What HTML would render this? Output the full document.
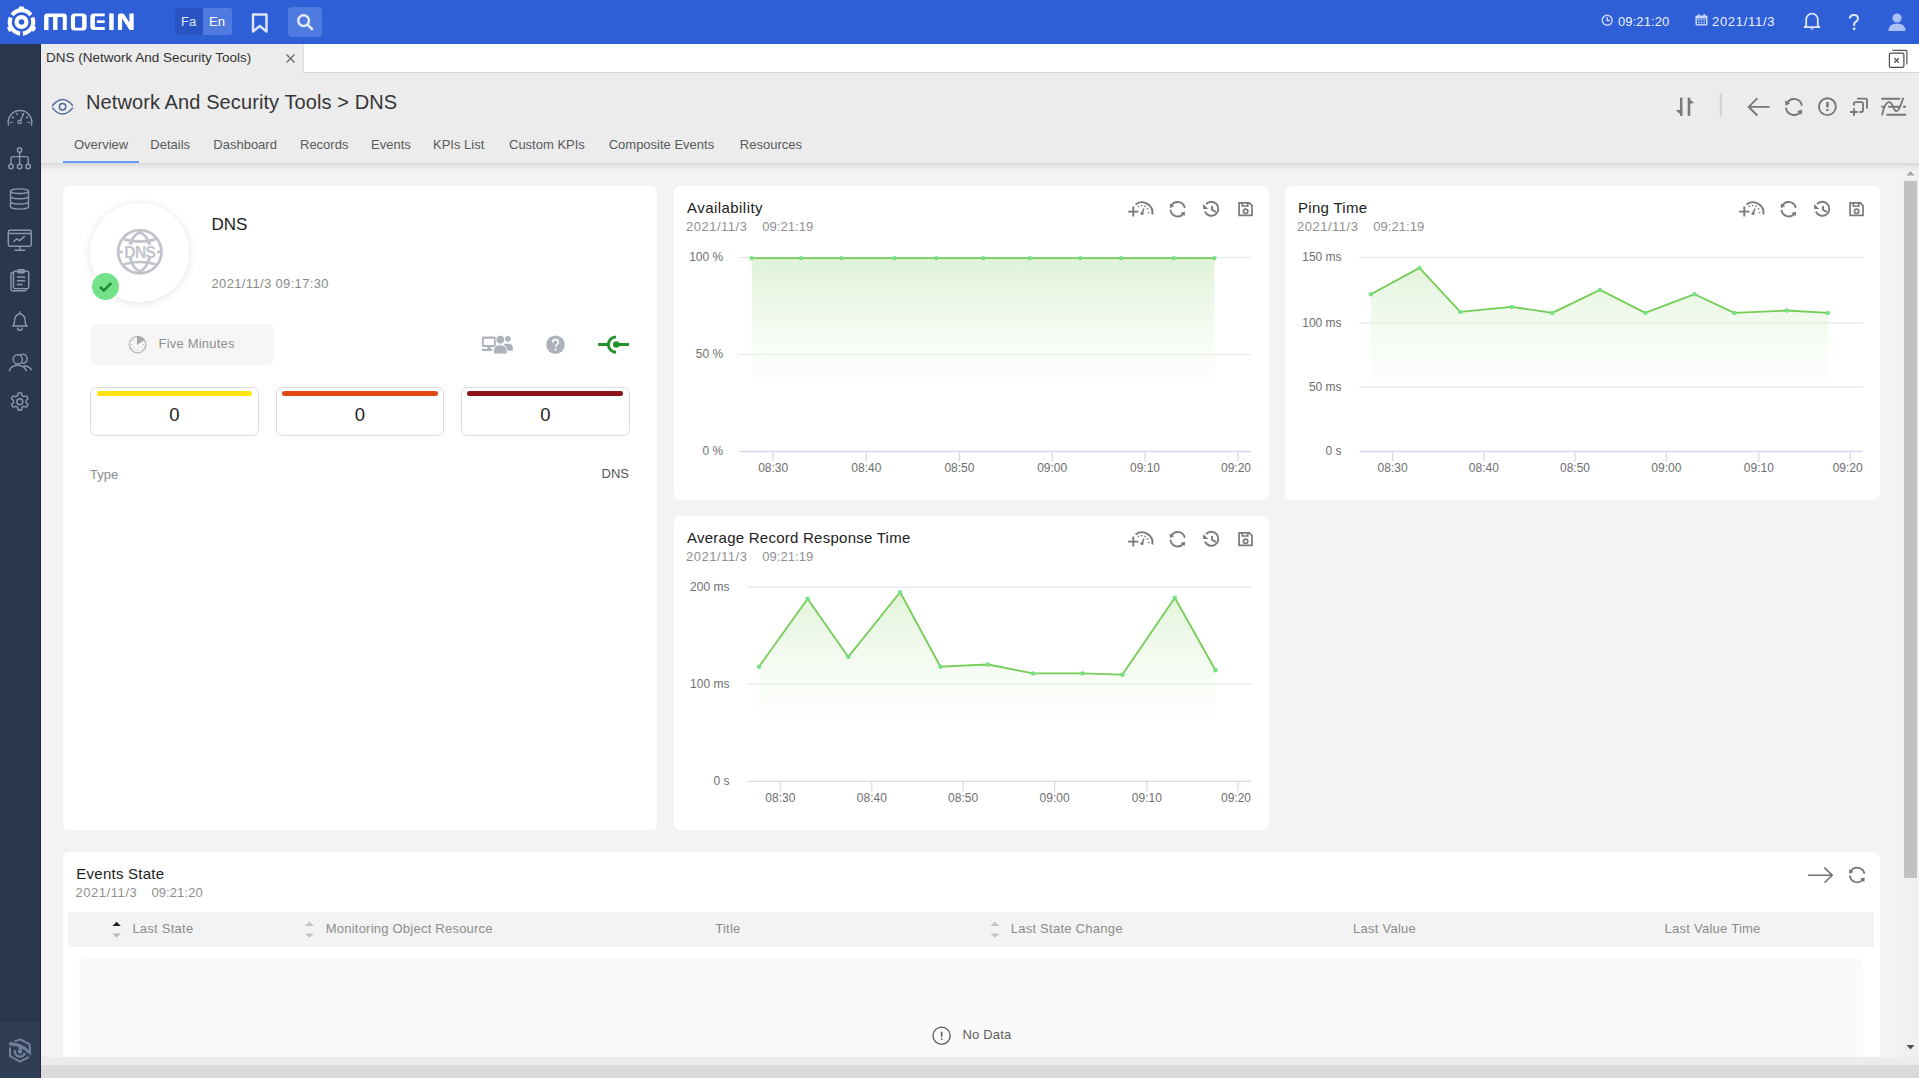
<!DOCTYPE html>
<html><head><meta charset="utf-8">
<style>
*{box-sizing:border-box;margin:0;padding:0}
html,body{width:1919px;height:1078px;overflow:hidden;background:#f3f3f3;font-family:"Liberation Sans",sans-serif;color:#333}
.abs{position:absolute}
#top{left:0;top:0;width:1919px;height:44px;background:#2f5fd7}
#side{left:0;top:44px;width:41px;height:1034px;background:#29374f;border-right:1px solid #1e2a40}
#side .low{position:absolute;left:0;top:978px;width:40px;height:56px;background:#2f3d55}
#tabs{left:41px;top:44px;width:1878px;height:29px;background:#fff;border-bottom:1px solid #d6d6d6}
#tab1{left:41px;top:44px;width:263px;height:29px;background:#ececec;border-right:1px solid #dedede}
#hdr{left:41px;top:73px;width:1878px;height:90px;background:#ececec}
#hdrsh{left:41px;top:163px;width:1878px;height:9px;background:linear-gradient(rgba(0,0,0,.11),rgba(0,0,0,.04) 45%,rgba(0,0,0,0))}
.card{position:absolute;background:#fff;border-radius:6px}
.t{position:absolute;white-space:nowrap;line-height:1}
.gray{color:#8c8c8c}
svg{position:absolute;overflow:visible}
</style></head><body>
<div id="top" class="abs">
 <!-- logo -->
 <svg style="left:0;top:0" width="150" height="44" viewBox="0 0 150 44">
  <g fill="none" stroke="#fff">
<circle cx="21.5" cy="22" r="4.9" stroke-width="4.2"/>
<path d="M20.07 33.61 A11.7 11.7 0 0 1 10.73 17.43" stroke-width="4.1"/>
<path d="M12.16 14.96 A11.7 11.7 0 0 1 30.84 14.96" stroke-width="4.1"/>
<path d="M32.27 17.43 A11.7 11.7 0 0 1 22.93 33.61" stroke-width="4.1"/>
</g>
  <g fill="#fff">
   <rect x="-2.6" y="-15.6" width="5" height="3.5" rx="1" transform="translate(21.5 22) rotate(0)"/>
   <rect x="-2.6" y="-15.6" width="5" height="3.5" rx="1" transform="translate(21.5 22) rotate(120)"/>
   <rect x="-2.6" y="-15.6" width="5" height="3.5" rx="1" transform="translate(21.5 22) rotate(240)"/>
   <!-- M -->
   <path d="M44.1 30.1 V17 Q44.1 13.6 47.5 13.6 H63.7 Q66.8 13.6 66.8 16.7 V30.1 H62.8 V18 Q62.8 17 61.8 17 H58.5 Q57.5 17 57.5 18 V30.1 H53.1 V18 Q53.1 17 52.1 17 H49.5 Q48.5 17 48.5 18 V30.1 Z"/>
   <!-- O -->
   <path fill-rule="evenodd" d="M70.9 17.1 Q70.9 13.6 74.4 13.6 H83.1 Q86.6 13.6 86.6 17.1 V27 Q86.6 30.5 83.1 30.5 H74.4 Q70.9 30.5 70.9 27 Z M76 16.25 Q75 16.25 75 17.25 V26.7 Q75 27.7 76 27.7 H81.1 Q82.1 27.7 82.1 26.7 V17.25 Q82.1 16.25 81.1 16.25 Z"/>
   <!-- E -->
   <path d="M90.35 16.9 Q90.35 13.4 93.85 13.4 H104.7 V16.25 H95.9 Q94.9 16.25 94.9 17.25 V25.9 Q94.9 26.9 95.9 26.9 H104.7 V30.06 H93.85 Q90.35 30.06 90.35 26.56 Z"/>
   <rect x="96.86" y="20.3" width="7.84" height="2.7"/>
   <!-- I -->
   <rect x="109.2" y="13.4" width="4.46" height="16.66"/>
   <!-- N -->
   <path d="M117.96 30.06 V15.4 Q117.96 13.4 119.96 13.4 H122.4 Q123.6 13.4 124.3 14.5 L129.4 22.6 V13.4 H133.7 V30.06 H129.6 L122.1 18.4 V30.06 Z"/>
  </g>
 </svg>
 <div class="abs" style="left:175px;top:8px;width:28px;height:27px;background:#2a54c2;border-radius:3px 0 0 3px"></div>
 <div class="abs" style="left:203px;top:8px;width:29px;height:27px;background:#4f7ae0;border-radius:0 3px 3px 0"></div>
 <div class="t" style="left:181px;top:15px;font-size:13px;color:#dfe6f8">Fa</div>
 <div class="t" style="left:209px;top:15px;font-size:13px;color:#fff">En</div>
 <svg style="left:250px;top:12px" width="20" height="22" viewBox="0 0 20 22"><path d="M3 2.5 H16.5 V19.5 L9.75 14 L3 19.5 Z" fill="none" stroke="#dfe5f7" stroke-width="2.4" stroke-linejoin="round"/></svg>
 <div class="abs" style="left:288px;top:7px;width:34px;height:30px;background:#4f7ae0;border-radius:4px"></div>
 <svg style="left:295px;top:12px" width="20" height="20" viewBox="0 0 20 20"><circle cx="8.6" cy="8.6" r="5.4" fill="none" stroke="#e6ebfa" stroke-width="2.4"/><path d="M12.6 12.6 L17 17" stroke="#e6ebfa" stroke-width="2.6" stroke-linecap="round"/></svg>
 <!-- right -->
 <svg style="left:1601px;top:14px" width="13" height="13" viewBox="0 0 13 13"><circle cx="6.2" cy="6.2" r="5" fill="none" stroke="#c9d6f7" stroke-width="1.4"/><path d="M6.2 3 V6.5 H9" fill="none" stroke="#c9d6f7" stroke-width="1.3"/></svg>
 <div class="t" style="left:1618px;top:15px;font-size:13px;color:#eef2ff;letter-spacing:0.1px">09:21:20</div>
 <svg style="left:1695px;top:14px" width="13" height="12" viewBox="0 0 13 12"><rect x="0.5" y="1.5" width="12" height="10" rx="1" fill="#c9d6f7"/><rect x="2" y="4.5" width="9" height="5.6" fill="#2f5fd7"/><g fill="#c9d6f7"><rect x="3" y="5.3" width="1.6" height="1.4"/><rect x="5.7" y="5.3" width="1.6" height="1.4"/><rect x="8.4" y="5.3" width="1.6" height="1.4"/><rect x="3" y="7.8" width="1.6" height="1.4"/><rect x="5.7" y="7.8" width="1.6" height="1.4"/><rect x="8.4" y="7.8" width="1.6" height="1.4"/></g><rect x="3" y="0" width="1.4" height="3" fill="#c9d6f7"/><rect x="8.6" y="0" width="1.4" height="3" fill="#c9d6f7"/></svg>
 <div class="t" style="left:1712px;top:15px;font-size:13px;color:#eef2ff;letter-spacing:0.7px">2021/11/3</div>
 <svg style="left:1802px;top:11px" width="20" height="20" viewBox="0 0 20 20"><path d="M4.2 14.6 V8.4 A5.8 5.8 0 0 1 15.8 8.4 V14.6 L17.4 16.2 H2.6 Z" fill="none" stroke="#dfe6fb" stroke-width="1.8" stroke-linejoin="round"/><path d="M8 17.6 H12 L10 19 Z" fill="#dfe6fb"/></svg>
 <svg style="left:1845px;top:12px" width="16" height="20" viewBox="0 0 16 20"><path d="M4.9 6.6 Q4.9 3 9 3 Q12.9 3 12.9 6.4 Q12.9 8.6 10.6 9.9 Q9.1 10.8 9.1 12.6 V14" fill="none" stroke="#dfe6fb" stroke-width="2.1"/><circle cx="9.1" cy="16.8" r="1.4" fill="#dfe6fb"/></svg>
 <svg style="left:1887px;top:12px" width="20" height="20" viewBox="0 0 20 20"><circle cx="10" cy="6" r="4.6" fill="#a9bff5"/><path d="M1.5 19 Q1.5 11.5 10 11.5 Q18.5 11.5 18.5 19 Z" fill="#a9bff5"/></svg>
</div>
<div id="side" class="abs"><div class="low"></div></div>
<svg style="left:0;top:0" width="41" height="1078" viewBox="0 0 41 1078">
 <g fill="none" stroke="#8b98ae" stroke-width="1.4" stroke-linecap="round" stroke-linejoin="round">
  <!-- gauge -->
  <path d="M8.5 125 A11.8 11.8 0 1 1 31.5 125"/>
  <path d="M10.40 122.40 L12.00 122.40 M12.14 116.89 L13.45 117.81 M16.72 113.38 L17.26 114.88 M23.28 113.38 L22.74 114.88 M27.86 116.89 L26.55 117.81 M29.60 122.40 L28.00 122.40 "/>
  <circle cx="19.6" cy="122" r="1.6"/>
  <path d="M20.4 120.6 L23.6 113.8"/>
  <!-- hierarchy -->
  <circle cx="19.6" cy="150" r="2.2"/>
  <path d="M19.6 152.2 V164.3 M11 164.3 V158.5 Q11 156.6 12.9 156.6 H26.3 Q28.2 156.6 28.2 158.5 V164.3"/>
  <circle cx="11" cy="166.5" r="2.2"/><circle cx="19.6" cy="166.5" r="2.2"/><circle cx="28.2" cy="166.5" r="2.2"/>
  <!-- database -->
  <ellipse cx="19.5" cy="191.2" rx="9" ry="2.3"/>
  <path d="M10.5 191.2 V206.8 A9 2.3 0 0 0 28.5 206.8 V191.2 M10.5 196.5 A9 2.3 0 0 0 28.5 196.5 M10.5 201.7 A9 2.3 0 0 0 28.5 201.7"/>
  <!-- monitor -->
  <rect x="8.3" y="230.2" width="23" height="16" rx="1.6"/>
  <path d="M8.3 233.5 H31.3 M19.8 246.2 V250 M14.8 250.3 H24.8 M13.8 241.5 L16.8 238.8 L19.5 240.6 L24.3 236.6"/>
  <!-- clipboard -->
  <path d="M13.5 272.5 H12.2 Q11 272.5 11 273.7 V289.6 Q11 290.8 12.2 290.8 H25 Q26.2 290.8 26.2 289.6 V289"/>
  <rect x="13.5" y="271.2" width="15.2" height="17.4" rx="1.4"/>
  <rect x="17.7" y="269.8" width="6.8" height="3" rx="1"/>
  <path d="M17.5 277 H24.8 M17.5 280.8 H24.8 M17.5 284.5 H22"/>
  <!-- bell -->
  <path d="M12.6 326 Q14.5 325 14.5 321 Q14.5 315.2 19.8 313.5 Q25.2 315.2 25.2 321 Q25.2 325 27.2 326 Z"/>
  <path d="M19.8 311.8 V313.4 M17.5 328 A2.3 2.3 0 0 0 22.1 328"/>
  <!-- users -->
  <circle cx="17.8" cy="359.3" r="4.6"/>
  <path d="M9.3 370.8 Q11.5 365.3 17.8 365.3 Q24 365.3 26.3 370.8"/>
  <path d="M20.5 354.6 A4.6 4.6 0 1 1 22.3 363.3 M24.3 365.8 Q29.3 366.6 31.5 369.8"/>
  <!-- gear -->
  <circle cx="19.8" cy="401.8" r="3"/>
  <path d="M18.2 393 H21.4 L22 395.6 L23.9 396.7 L26.5 395.9 L28.1 398.6 L26.1 400.4 V402.6 L28.1 404.4 L26.5 407.1 L23.9 406.3 L22 407.4 L21.4 410.2 H18.2 L17.6 407.4 L15.7 406.3 L13.1 407.1 L11.5 404.4 L13.5 402.6 V400.4 L11.5 398.6 L13.1 395.9 L15.7 396.7 L17.6 395.6 Z"/>
 </g>
 <!-- bottom logo -->
 <g fill="none" stroke="#71819a" stroke-width="2" stroke-linejoin="round">
  <path d="M14.7 1041.4 L20 1039.4 L29.5 1044.2 Q30 1047 30 1050.6"/>
  <path d="M10 1047.5 V1056.2 L20 1061.7 L28.9 1057"/>
  <path d="M15.01 1050.05 A5.2 5.2 0 0 0 24.92 1053.18" stroke-width="2.3"/>
 </g>
 <path d="M9.2 1041.7 Q15 1042.6 19.5 1043.9 Q25 1046 28.7 1050 L30.9 1050.6 V1055.6 L25 1050.6 Q21 1047.8 17.5 1046.4 Q13 1045.6 9.2 1045.6 Z" fill="#71819a"/>
 <circle cx="20.03" cy="1051.5" r="2.2" fill="#71819a"/>
 <rect x="18.6" y="1047" width="3" height="4" fill="#71819a"/>
</svg>
<!-- scrollbar -->
<div class="abs" style="left:1902px;top:163px;width:17px;height:894px;background:#f1f1f1"></div>
<div class="abs" style="left:1904px;top:181px;width:13px;height:697px;background:#c1c1c1"></div>
<svg style="left:1902px;top:163px" width="17" height="894" viewBox="0 0 17 894"><path d="M4.5 12.5 L8.5 8 L12.5 12.5 Z" fill="#a3a3a3"/><path d="M4.5 882 L8.5 886.5 L12.5 882 Z" fill="#505050"/></svg>
<div id="tabs" class="abs"></div>
<div id="tab1" class="abs"></div>
<div id="hdr" class="abs"></div>
<div id="hdrsh" class="abs"></div>
<div class="t" style="left:46px;top:51px;font-size:13.5px;color:#333">DNS (Network And Security Tools)</div>
<svg style="left:285px;top:53px" width="11" height="11" viewBox="0 0 11 11"><path d="M1.5 1.5 L9.5 9.5 M9.5 1.5 L1.5 9.5" stroke="#666" stroke-width="1.2"/></svg>
<svg style="left:1880px;top:44px" width="35" height="30" viewBox="1880 44 35 30"><path d="M1892.4 50.3 H1905.7 Q1906.9 50.3 1906.9 51.5 V64.4" fill="none" stroke="#555" stroke-width="1.2"/><rect x="1889.4" y="53.1" width="14.5" height="14.3" rx="1.3" fill="#fff" stroke="#4a4a4a" stroke-width="1.2"/><path d="M1894.4 58.1 L1898.8 62.6 M1898.8 58.1 L1894.4 62.6" stroke="#333" stroke-width="1.1"/></svg>
<!-- title -->
<svg style="left:48px;top:92px" width="30" height="26" viewBox="48 92 30 26"><g fill="none" stroke="#4d6a9d" stroke-width="1.45"><path d="M52.2 106 Q62.5 93.2 72.9 105.8"/><path d="M52.2 107.6 Q62.5 120.5 72.9 107.6"/><circle cx="62.55" cy="106.75" r="3.2"/></g></svg>
<div class="t" style="left:86px;top:92.4px;font-size:20px;color:#363636;letter-spacing:0.1px">Network And Security Tools &gt; DNS</div>
<div class="t" style="left:74px;top:138.2px;font-size:13px;color:#5a5a5a">Overview</div>
<div class="t" style="left:150.3px;top:138.2px;font-size:13px;color:#5a5a5a">Details</div>
<div class="t" style="left:213.3px;top:138.2px;font-size:13px;color:#5a5a5a">Dashboard</div>
<div class="t" style="left:300px;top:138.2px;font-size:13px;color:#5a5a5a">Records</div>
<div class="t" style="left:371px;top:138.2px;font-size:13px;color:#5a5a5a">Events</div>
<div class="t" style="left:433px;top:138.2px;font-size:13px;color:#5a5a5a">KPIs List</div>
<div class="t" style="left:509px;top:138.2px;font-size:13px;color:#5a5a5a">Custom KPIs</div>
<div class="t" style="left:608.7px;top:138.2px;font-size:13px;color:#5a5a5a">Composite Events</div>
<div class="t" style="left:739.8px;top:138.2px;font-size:13px;color:#5a5a5a">Resources</div>
<div class="abs" style="left:63px;top:160.6px;width:76px;height:2.4px;background:#679cf4"></div>
<!-- header right icons -->
<svg style="left:1660px;top:85px" width="259" height="45" viewBox="1660 85 259 45">
 <g fill="#7a7a7a">
  <rect x="1680" y="97.6" width="2.4" height="18.2"/>
  <path d="M1675.9 110.3 L1682.4 109.6 L1682.2 116 Z"/>
  <rect x="1687.7" y="97.6" width="2.6" height="18.2"/>
  <path d="M1687.7 97.5 L1694.1 102.9 L1689.5 103.7 Z"/>
 </g>
 <rect x="1719.8" y="93" width="2" height="23.7" fill="#d3d3d7"/>
 <path d="M1787.07 103.00 A8 8 0 0 1 1801.88 105.61 M1786.03 107.70 A8 8 0 0 0 1800.13 112.14" fill="none" stroke="#777" stroke-width="1.9"/><path d="M1785.50 105.73 L1785.00 100.59 L1790.19 103.59 Z" fill="#777"/><path d="M1802.15 109.73 L1801.75 114.88 L1797.16 111.02 Z" fill="#777"/>
 <g fill="none" stroke="#777" stroke-width="1.9">
  <path d="M1748.5 106.9 H1769.6 M1757.3 98.3 L1748.7 106.9 L1757.3 115.5"/>
  
  <circle cx="1827.4" cy="106.7" r="8.45"/>
  <path d="M1854 105.6 V103.6 Q1854 102.1 1855.5 102.1 H1861.5 Q1863 102.1 1863 103.6 V110.6 Q1863 112 1861.5 112 H1859.3"/>
  <path d="M1858 99.5 V98.6 H1865.5 Q1867 98.6 1867 100.1 V108.4"/>
  <path d="M1850 112 H1857.7 M1854 108.2 V115.7"/>
  <path d="M1881.3 98.8 H1900.2 M1886.5 114.7 H1906.1 M1881.3 106.8 H1885.2 M1888.3 106.8 H1899.5 M1903 106.8 H1906"/>
  <path d="M1882 115.3 Q1885 101.5 1889.3 102.1 Q1891.5 102.4 1893.5 107.5 Q1895 111.4 1896.5 111.4 Q1899 111.2 1903.3 97.8"/>
 </g>
 <g fill="#777">
  
  <rect x="1826.2" y="102" width="2.5" height="5.3"/>
  <rect x="1826.2" y="109" width="2.5" height="1.9"/>
 </g>
</svg>

<!-- cards -->
<div class="card" style="left:63px;top:186px;width:594px;height:644px"></div>
<div class="card" style="left:674px;top:186px;width:595px;height:314px"></div>
<div class="card" style="left:1285px;top:186px;width:595px;height:314px"></div>
<div class="card" style="left:674px;top:516px;width:595px;height:314px"></div>
<div class="card" style="left:63px;top:852px;width:1817px;height:230px"></div>


<!-- DNS card content -->
<div class="abs" style="left:90px;top:203px;width:99px;height:99px;border-radius:50%;background:#fff;box-shadow:0 1px 8px rgba(0,0,0,.12)"></div>
<svg style="left:110px;top:222px" width="60" height="60" viewBox="110 222 60 60">
 <g fill="none" stroke="#c0c3ca" stroke-width="2.7">
  <circle cx="139.77" cy="251.77" r="21.6"/>
  <path d="M130.59 242.87 Q133.37 234.80 139.77 232.29 Q146.17 234.80 148.95 242.87"/>
  <path d="M130.59 259.28 Q133.37 268.74 139.77 271.53 Q146.17 268.74 148.95 259.28"/>
  <path d="M124.19 239.36 Q139.77 243.70 155.35 239.36"/>
  <path d="M124.19 264.18 Q139.77 259.84 155.35 264.18"/>
  <path d="M128.92 243.42 H132.26 M147.56 243.42 H150.90 M128.92 259.01 H132.26 M147.56 259.01 H150.90"/>
  <path d="M119.46 251.94 H122.80 M157.02 251.94 H160.36"/>
 </g>
 <text x="139.77" y="257.6" text-anchor="middle" font-family="Liberation Sans" font-weight="bold" font-size="15.6" fill="#c0c3ca" letter-spacing="-0.7">DNS</text>
</svg>
<div class="abs" style="left:90px;top:271px;width:31px;height:31px;border-radius:50%;background:#fff"></div>
<div class="abs" style="left:92px;top:273px;width:27px;height:27px;border-radius:50%;background:#74e28a"></div>
<svg style="left:92px;top:273px" width="27" height="27" viewBox="0 0 27 27"><path d="M8 14 L11.8 17.6 L19.3 10" fill="none" stroke="#1c8a36" stroke-width="2.5"/></svg>
<div class="t" style="left:211.5px;top:216.2px;font-size:17px;color:#222">DNS</div>
<div class="t" style="left:211.5px;top:276.8px;font-size:13px;color:#8a8a8a;letter-spacing:0.35px">2021/11/3 09:17:30</div>
<div class="abs" style="left:90px;top:324px;width:184px;height:41px;border-radius:6px;background:#f6f6f6"></div>
<svg style="left:128px;top:335px" width="20" height="20" viewBox="0 0 20 20">
 <circle cx="9.6" cy="9.6" r="8.2" fill="none" stroke="#b5b5b5" stroke-width="1.3"/>
 <path d="M9.6 1.4 A8.2 8.2 0 0 1 16.4 5.1 L9.6 9.6 Z" fill="#a8a8a8"/>
 <path d="M9.6 9.6 V1.4" stroke="#a8a8a8" stroke-width="1.3"/>
 <g stroke="#b5b5b5" stroke-width="1"><path d="M3.2 9.6 H4.4 M9.6 16 V14.8 M14.8 9.6 H16 M5 14.2 L5.8 13.4 M14.2 14.2 L13.4 13.4 M5 5 L5.8 5.8"/></g>
</svg>
<div class="t" style="left:158.5px;top:336.8px;font-size:13px;color:#8f8f8f;letter-spacing:0.2px">Five Minutes</div>
<svg style="left:478px;top:330px" width="40" height="28" viewBox="478 330 40 28">
 <g fill="#adb1ba">
  <path fill-rule="evenodd" d="M483.4 336.4 H494.4 Q495.9 336.4 495.9 337.9 V345.4 Q495.9 346.9 494.4 346.9 H483.4 Q481.9 346.9 481.9 345.4 V337.9 Q481.9 336.4 483.4 336.4 Z M483.8 338.8 V345.1 H494 V338.8 Z"/>
  <rect x="487.2" y="346.5" width="3.5" height="3"/>
  <rect x="481.9" y="349.1" width="10.4" height="1.8" rx="0.5"/>
  <circle cx="507.9" cy="338.8" r="2.9"/>
  <path d="M504.2 343.8 H508.5 Q512.9 343.8 512.9 348.3 V350.8 H504.2 Z"/>
 </g>
 <g fill="#adb1ba" stroke="#fff" stroke-width="0.9">
  <circle cx="500.3" cy="339.7" r="4.4"/>
  <path d="M493.4 354 V351.5 Q493.4 344.8 500.2 344.8 Q507.1 344.8 507.1 351.5 V354 Z"/>
 </g>
</svg>
<svg style="left:546px;top:335px" width="20" height="20" viewBox="0 0 20 20">
 <circle cx="9.5" cy="9.7" r="9.3" fill="#adb1ba"/>
 <path d="M6.7 7.5 Q6.7 4.6 9.6 4.6 Q12.4 4.6 12.4 7.2 Q12.4 8.8 10.8 9.6 Q9.6 10.3 9.6 12" fill="none" stroke="#fff" stroke-width="1.6"/>
 <circle cx="9.6" cy="14.6" r="1.1" fill="#fff"/>
</svg>
<svg style="left:595px;top:330px" width="40" height="28" viewBox="595 330 40 28">
 <g fill="none" stroke="#22932b" stroke-width="2.9">
  <path d="M598.2 344.55 H608 M616 344.55 H629"/>
  <path d="M616 336.9 A7.65 7.65 0 0 0 616 352.2"/>
 </g>
 <circle cx="616.3" cy="344.5" r="3.3" fill="#22932b"/>
</svg>
<div class="abs" style="left:90px;top:387px;width:169px;height:49px;border:1px solid #dcdcdc;border-radius:6px;background:#fff"></div>
<div class="abs" style="left:97px;top:391px;width:155px;height:5px;border-radius:3px;background:#fde311"></div>
<div class="abs" style="left:276px;top:387px;width:168px;height:49px;border:1px solid #dcdcdc;border-radius:6px;background:#fff"></div>
<div class="abs" style="left:282px;top:391px;width:156px;height:5px;border-radius:3px;background:#e34914"></div>
<div class="abs" style="left:461px;top:387px;width:169px;height:49px;border:1px solid #dcdcdc;border-radius:6px;background:#fff"></div>
<div class="abs" style="left:467px;top:391px;width:156px;height:5px;border-radius:3px;background:#8d1318"></div>
<div class="t" style="left:90px;top:405.5px;width:169px;text-align:center;font-size:18.5px;color:#222">0</div>
<div class="t" style="left:276px;top:405.5px;width:168px;text-align:center;font-size:18.5px;color:#222">0</div>
<div class="t" style="left:461px;top:405.5px;width:169px;text-align:center;font-size:18.5px;color:#222">0</div>
<div class="t" style="left:90px;top:468px;font-size:13px;color:#8c8c8c">Type</div>
<div class="t" style="left:529px;top:467px;width:100px;text-align:right;font-size:13px;color:#555">DNS</div>
<!-- CHARTS -->
<div class="t" style="left:687px;top:200.1px;font-size:15px;color:#222;letter-spacing:0.45px">Availability</div>
<div class="t" style="left:686px;top:219.6px;font-size:13px;color:#8f8f8f;letter-spacing:0.5px">2021/11/3</div>
<div class="t" style="left:762.2px;top:219.6px;font-size:13px;color:#8f8f8f;letter-spacing:0.05px">09:21:19</div>
<div class="t" style="left:643.2px;top:251.3px;width:80px;text-align:right;font-size:12px;color:#6e6e6e">100 %</div>
<div class="t" style="left:643.2px;top:348.3px;width:80px;text-align:right;font-size:12px;color:#6e6e6e">50 %</div>
<div class="t" style="left:643.2px;top:445.3px;width:80px;text-align:right;font-size:12px;color:#6e6e6e">0 %</div>
<div class="t" style="left:743.2px;top:461.7px;width:60px;text-align:center;font-size:12px;color:#6e6e6e">08:30</div>
<div class="t" style="left:836.3px;top:461.7px;width:60px;text-align:center;font-size:12px;color:#6e6e6e">08:40</div>
<div class="t" style="left:929.4px;top:461.7px;width:60px;text-align:center;font-size:12px;color:#6e6e6e">08:50</div>
<div class="t" style="left:1022.2px;top:461.7px;width:60px;text-align:center;font-size:12px;color:#6e6e6e">09:00</div>
<div class="t" style="left:1115.0px;top:461.7px;width:60px;text-align:center;font-size:12px;color:#6e6e6e">09:10</div>
<div class="t" style="left:1191.0px;top:461.7px;width:60px;text-align:right;font-size:12px;color:#6e6e6e">09:20</div>
<svg style="left:674px;top:186px" width="595" height="314" viewBox="674 186 595 314">
<defs><linearGradient id="g674_186" x1="0" y1="257.5" x2="0" y2="385" gradientUnits="userSpaceOnUse"><stop offset="0" stop-color="#d9f0cf" stop-opacity="0.85"/><stop offset="1" stop-color="#f4fbf1" stop-opacity="0.2"/></linearGradient></defs>
<path d="M739 257.5 H1251" stroke="#e6e6e6" stroke-width="1.2"/>
<path d="M739 354.5 H1251" stroke="#e6e6e6" stroke-width="1.2"/>
<path d="M751.7 385 L751.7 258.1 L801 258.1 L841.6 258.1 L894.4 258.1 L936.4 258.1 L983.4 258.1 L1029.8 258.1 L1080.4 258.1 L1121 258.1 L1173.8 258.1 L1214.5 258.1 L1214.5 385 Z" fill="url(#g674_186)"/>
<path d="M739 451.5 H1251" stroke="#d3dbee" stroke-width="1.3"/>
<path d="M773.2 451.5 V461.5" stroke="#d3dbee" stroke-width="1.3"/>
<path d="M866.3 451.5 V461.5" stroke="#d3dbee" stroke-width="1.3"/>
<path d="M959.4 451.5 V461.5" stroke="#d3dbee" stroke-width="1.3"/>
<path d="M1052.2 451.5 V461.5" stroke="#d3dbee" stroke-width="1.3"/>
<path d="M1145 451.5 V461.5" stroke="#d3dbee" stroke-width="1.3"/>
<path d="M1238.1 451.5 V461.5" stroke="#d3dbee" stroke-width="1.3"/>
<path d="M751.7 258.1 L801 258.1 L841.6 258.1 L894.4 258.1 L936.4 258.1 L983.4 258.1 L1029.8 258.1 L1080.4 258.1 L1121 258.1 L1173.8 258.1 L1214.5 258.1" fill="none" stroke="#74cd55" stroke-width="1.8" stroke-linejoin="round"/>
<circle cx="751.7" cy="258.1" r="2.2" fill="#74e184"/>
<circle cx="801" cy="258.1" r="2.2" fill="#74e184"/>
<circle cx="841.6" cy="258.1" r="2.2" fill="#74e184"/>
<circle cx="894.4" cy="258.1" r="2.2" fill="#74e184"/>
<circle cx="936.4" cy="258.1" r="2.2" fill="#74e184"/>
<circle cx="983.4" cy="258.1" r="2.2" fill="#74e184"/>
<circle cx="1029.8" cy="258.1" r="2.2" fill="#74e184"/>
<circle cx="1080.4" cy="258.1" r="2.2" fill="#74e184"/>
<circle cx="1121" cy="258.1" r="2.2" fill="#74e184"/>
<circle cx="1173.8" cy="258.1" r="2.2" fill="#74e184"/>
<circle cx="1214.5" cy="258.1" r="2.2" fill="#74e184"/>
</svg>
<svg style="left:1125px;top:198px" width="132" height="22" viewBox="1125 198 132 22">
 <g fill="none" stroke="#7a7a7a" stroke-width="1.9">
  <path d="M1128.1 211.6 H1138.5 M1133.3 206.6 V216.4"/>
  <path d="M1135.6 204.4 A10.6 10.6 0 0 1 1152.4 214.5"/>
  <path d="M1206 204.2 A7 7 0 1 1 1204.9 211.6"/>
  <path d="M1212 206 V209.8 L1215.8 211.9"/>
 </g>
 <g fill="none" stroke="#7a7a7a" stroke-width="1.7">
  <path d="M1239.1 202.9 H1249.3 L1252 205.6 V215.4 H1239.1 Z"/>
  <path d="M1242.3 203 V206 H1247.8 V203"/>
  <circle cx="1245.6" cy="211.3" r="2.2"/>
 </g>
 <path d="M1171.46 205.60 A7.2 7.2 0 0 1 1184.79 207.95 M1170.53 209.83 A7.2 7.2 0 0 0 1183.22 213.83" fill="none" stroke="#7a7a7a" stroke-width="1.9"/><path d="M1170.05 208.06 L1169.60 203.43 L1174.28 206.13 Z" fill="#7a7a7a"/><path d="M1185.04 211.66 L1184.68 216.29 L1180.54 212.82 Z" fill="#7a7a7a"/>
 <g fill="#7a7a7a">
  <path d="M1141 213.4 L1143.3 208.2 L1144.6 208.7 L1142.8 214 Z"/>
  <circle cx="1142" cy="213.5" r="1.6"/>
  <circle cx="1138.4" cy="206.4" r="0.85"/><circle cx="1141.7" cy="205.5" r="0.85"/><circle cx="1145.1" cy="206.3" r="0.85"/><circle cx="1147.6" cy="208.8" r="0.85"/><circle cx="1148.6" cy="212.5" r="0.85"/>
  <path d="M1203.1 203.9 L1203.2 209 L1208.3 208.9 Z"/>
 </g>
</svg>
<div class="t" style="left:1298px;top:200.1px;font-size:15px;color:#222;letter-spacing:0.3px">Ping Time</div>
<div class="t" style="left:1297px;top:219.6px;font-size:13px;color:#8f8f8f;letter-spacing:0.5px">2021/11/3</div>
<div class="t" style="left:1373.2px;top:219.6px;font-size:13px;color:#8f8f8f;letter-spacing:0.05px">09:21:19</div>
<div class="t" style="left:1261.6px;top:251.1px;width:80px;text-align:right;font-size:12px;color:#6e6e6e">150 ms</div>
<div class="t" style="left:1261.6px;top:316.6px;width:80px;text-align:right;font-size:12px;color:#6e6e6e">100 ms</div>
<div class="t" style="left:1261.6px;top:380.6px;width:80px;text-align:right;font-size:12px;color:#6e6e6e">50 ms</div>
<div class="t" style="left:1261.6px;top:445.3px;width:80px;text-align:right;font-size:12px;color:#6e6e6e">0 s</div>
<div class="t" style="left:1362.6px;top:461.7px;width:60px;text-align:center;font-size:12px;color:#6e6e6e">08:30</div>
<div class="t" style="left:1453.8px;top:461.7px;width:60px;text-align:center;font-size:12px;color:#6e6e6e">08:40</div>
<div class="t" style="left:1545.0px;top:461.7px;width:60px;text-align:center;font-size:12px;color:#6e6e6e">08:50</div>
<div class="t" style="left:1636.3px;top:461.7px;width:60px;text-align:center;font-size:12px;color:#6e6e6e">09:00</div>
<div class="t" style="left:1728.8px;top:461.7px;width:60px;text-align:center;font-size:12px;color:#6e6e6e">09:10</div>
<div class="t" style="left:1802.7px;top:461.7px;width:60px;text-align:right;font-size:12px;color:#6e6e6e">09:20</div>
<svg style="left:1285px;top:186px" width="595" height="314" viewBox="1285 186 595 314">
<defs><linearGradient id="g1285_186" x1="0" y1="257.3" x2="0" y2="386" gradientUnits="userSpaceOnUse"><stop offset="0" stop-color="#d9f0cf" stop-opacity="0.85"/><stop offset="1" stop-color="#f4fbf1" stop-opacity="0.2"/></linearGradient></defs>
<path d="M1359.3 257.3 H1862.7" stroke="#e6e6e6" stroke-width="1.2"/>
<path d="M1359.3 322.8 H1862.7" stroke="#e6e6e6" stroke-width="1.2"/>
<path d="M1359.3 386.8 H1862.7" stroke="#e6e6e6" stroke-width="1.2"/>
<path d="M1370.9 386 L1370.9 294.2 L1419.5 267.9 L1460.2 311.9 L1511.8 306.9 L1552.4 312.9 L1600 289.9 L1645.3 312.9 L1694.6 294.2 L1734.2 312.9 L1786.8 310.5 L1827.8 312.9 L1827.8 386 Z" fill="url(#g1285_186)"/>
<path d="M1359.3 451.5 H1862.7" stroke="#d3dbee" stroke-width="1.3"/>
<path d="M1392.6 451.5 V461.5" stroke="#d3dbee" stroke-width="1.3"/>
<path d="M1483.8 451.5 V461.5" stroke="#d3dbee" stroke-width="1.3"/>
<path d="M1575 451.5 V461.5" stroke="#d3dbee" stroke-width="1.3"/>
<path d="M1666.3 451.5 V461.5" stroke="#d3dbee" stroke-width="1.3"/>
<path d="M1758.8 451.5 V461.5" stroke="#d3dbee" stroke-width="1.3"/>
<path d="M1850.4 451.5 V461.5" stroke="#d3dbee" stroke-width="1.3"/>
<path d="M1370.9 294.2 L1419.5 267.9 L1460.2 311.9 L1511.8 306.9 L1552.4 312.9 L1600 289.9 L1645.3 312.9 L1694.6 294.2 L1734.2 312.9 L1786.8 310.5 L1827.8 312.9" fill="none" stroke="#74cd55" stroke-width="1.8" stroke-linejoin="round"/>
<circle cx="1370.9" cy="294.2" r="2.2" fill="#74e184"/>
<circle cx="1419.5" cy="267.9" r="2.2" fill="#74e184"/>
<circle cx="1460.2" cy="311.9" r="2.2" fill="#74e184"/>
<circle cx="1511.8" cy="306.9" r="2.2" fill="#74e184"/>
<circle cx="1552.4" cy="312.9" r="2.2" fill="#74e184"/>
<circle cx="1600" cy="289.9" r="2.2" fill="#74e184"/>
<circle cx="1645.3" cy="312.9" r="2.2" fill="#74e184"/>
<circle cx="1694.6" cy="294.2" r="2.2" fill="#74e184"/>
<circle cx="1734.2" cy="312.9" r="2.2" fill="#74e184"/>
<circle cx="1786.8" cy="310.5" r="2.2" fill="#74e184"/>
<circle cx="1827.8" cy="312.9" r="2.2" fill="#74e184"/>
</svg>
<svg style="left:1736px;top:198px" width="132" height="22" viewBox="1125 198 132 22">
 <g fill="none" stroke="#7a7a7a" stroke-width="1.9">
  <path d="M1128.1 211.6 H1138.5 M1133.3 206.6 V216.4"/>
  <path d="M1135.6 204.4 A10.6 10.6 0 0 1 1152.4 214.5"/>
  <path d="M1206 204.2 A7 7 0 1 1 1204.9 211.6"/>
  <path d="M1212 206 V209.8 L1215.8 211.9"/>
 </g>
 <g fill="none" stroke="#7a7a7a" stroke-width="1.7">
  <path d="M1239.1 202.9 H1249.3 L1252 205.6 V215.4 H1239.1 Z"/>
  <path d="M1242.3 203 V206 H1247.8 V203"/>
  <circle cx="1245.6" cy="211.3" r="2.2"/>
 </g>
 <path d="M1171.46 205.60 A7.2 7.2 0 0 1 1184.79 207.95 M1170.53 209.83 A7.2 7.2 0 0 0 1183.22 213.83" fill="none" stroke="#7a7a7a" stroke-width="1.9"/><path d="M1170.05 208.06 L1169.60 203.43 L1174.28 206.13 Z" fill="#7a7a7a"/><path d="M1185.04 211.66 L1184.68 216.29 L1180.54 212.82 Z" fill="#7a7a7a"/>
 <g fill="#7a7a7a">
  <path d="M1141 213.4 L1143.3 208.2 L1144.6 208.7 L1142.8 214 Z"/>
  <circle cx="1142" cy="213.5" r="1.6"/>
  <circle cx="1138.4" cy="206.4" r="0.85"/><circle cx="1141.7" cy="205.5" r="0.85"/><circle cx="1145.1" cy="206.3" r="0.85"/><circle cx="1147.6" cy="208.8" r="0.85"/><circle cx="1148.6" cy="212.5" r="0.85"/>
  <path d="M1203.1 203.9 L1203.2 209 L1208.3 208.9 Z"/>
 </g>
</svg>
<div class="t" style="left:687px;top:530.1px;font-size:15px;color:#222;letter-spacing:0.25px">Average Record Response Time</div>
<div class="t" style="left:686px;top:549.6px;font-size:13px;color:#8f8f8f;letter-spacing:0.5px">2021/11/3</div>
<div class="t" style="left:762.2px;top:549.6px;font-size:13px;color:#8f8f8f;letter-spacing:0.05px">09:21:19</div>
<div class="t" style="left:649.4px;top:581.0px;width:80px;text-align:right;font-size:12px;color:#6e6e6e">200 ms</div>
<div class="t" style="left:649.4px;top:678.0px;width:80px;text-align:right;font-size:12px;color:#6e6e6e">100 ms</div>
<div class="t" style="left:649.4px;top:775.1px;width:80px;text-align:right;font-size:12px;color:#6e6e6e">0 s</div>
<div class="t" style="left:750.3px;top:791.5px;width:60px;text-align:center;font-size:12px;color:#6e6e6e">08:30</div>
<div class="t" style="left:841.8px;top:791.5px;width:60px;text-align:center;font-size:12px;color:#6e6e6e">08:40</div>
<div class="t" style="left:933.1px;top:791.5px;width:60px;text-align:center;font-size:12px;color:#6e6e6e">08:50</div>
<div class="t" style="left:1024.6px;top:791.5px;width:60px;text-align:center;font-size:12px;color:#6e6e6e">09:00</div>
<div class="t" style="left:1116.8px;top:791.5px;width:60px;text-align:center;font-size:12px;color:#6e6e6e">09:10</div>
<div class="t" style="left:1191.0px;top:791.5px;width:60px;text-align:right;font-size:12px;color:#6e6e6e">09:20</div>
<svg style="left:674px;top:516px" width="595" height="314" viewBox="674 516 595 314">
<defs><linearGradient id="g674_516" x1="0" y1="587.2" x2="0" y2="718" gradientUnits="userSpaceOnUse"><stop offset="0" stop-color="#d9f0cf" stop-opacity="0.85"/><stop offset="1" stop-color="#f4fbf1" stop-opacity="0.2"/></linearGradient></defs>
<path d="M747.2 587.2 H1251" stroke="#e6e6e6" stroke-width="1.2"/>
<path d="M747.2 684.2 H1251" stroke="#e6e6e6" stroke-width="1.2"/>
<path d="M759 718 L759 666.7 L807.6 598.7 L848.3 656.9 L900.1 592.3 L940.5 666.7 L987.9 664.5 L1033 673.4 L1082.6 673.4 L1122.3 674.7 L1174.8 597.7 L1215.5 670.2 L1215.5 718 Z" fill="url(#g674_516)"/>
<path d="M747.2 781.3 H1251" stroke="#d3dbee" stroke-width="1.3"/>
<path d="M780.3 781.3 V791.3" stroke="#d3dbee" stroke-width="1.3"/>
<path d="M871.8 781.3 V791.3" stroke="#d3dbee" stroke-width="1.3"/>
<path d="M963.1 781.3 V791.3" stroke="#d3dbee" stroke-width="1.3"/>
<path d="M1054.6 781.3 V791.3" stroke="#d3dbee" stroke-width="1.3"/>
<path d="M1146.8 781.3 V791.3" stroke="#d3dbee" stroke-width="1.3"/>
<path d="M1238 781.3 V791.3" stroke="#d3dbee" stroke-width="1.3"/>
<path d="M759 666.7 L807.6 598.7 L848.3 656.9 L900.1 592.3 L940.5 666.7 L987.9 664.5 L1033 673.4 L1082.6 673.4 L1122.3 674.7 L1174.8 597.7 L1215.5 670.2" fill="none" stroke="#74cd55" stroke-width="1.8" stroke-linejoin="round"/>
<circle cx="759" cy="666.7" r="2.2" fill="#74e184"/>
<circle cx="807.6" cy="598.7" r="2.2" fill="#74e184"/>
<circle cx="848.3" cy="656.9" r="2.2" fill="#74e184"/>
<circle cx="900.1" cy="592.3" r="2.2" fill="#74e184"/>
<circle cx="940.5" cy="666.7" r="2.2" fill="#74e184"/>
<circle cx="987.9" cy="664.5" r="2.2" fill="#74e184"/>
<circle cx="1033" cy="673.4" r="2.2" fill="#74e184"/>
<circle cx="1082.6" cy="673.4" r="2.2" fill="#74e184"/>
<circle cx="1122.3" cy="674.7" r="2.2" fill="#74e184"/>
<circle cx="1174.8" cy="597.7" r="2.2" fill="#74e184"/>
<circle cx="1215.5" cy="670.2" r="2.2" fill="#74e184"/>
</svg>
<svg style="left:1125px;top:528px" width="132" height="22" viewBox="1125 198 132 22">
 <g fill="none" stroke="#7a7a7a" stroke-width="1.9">
  <path d="M1128.1 211.6 H1138.5 M1133.3 206.6 V216.4"/>
  <path d="M1135.6 204.4 A10.6 10.6 0 0 1 1152.4 214.5"/>
  <path d="M1206 204.2 A7 7 0 1 1 1204.9 211.6"/>
  <path d="M1212 206 V209.8 L1215.8 211.9"/>
 </g>
 <g fill="none" stroke="#7a7a7a" stroke-width="1.7">
  <path d="M1239.1 202.9 H1249.3 L1252 205.6 V215.4 H1239.1 Z"/>
  <path d="M1242.3 203 V206 H1247.8 V203"/>
  <circle cx="1245.6" cy="211.3" r="2.2"/>
 </g>
 <path d="M1171.46 205.60 A7.2 7.2 0 0 1 1184.79 207.95 M1170.53 209.83 A7.2 7.2 0 0 0 1183.22 213.83" fill="none" stroke="#7a7a7a" stroke-width="1.9"/><path d="M1170.05 208.06 L1169.60 203.43 L1174.28 206.13 Z" fill="#7a7a7a"/><path d="M1185.04 211.66 L1184.68 216.29 L1180.54 212.82 Z" fill="#7a7a7a"/>
 <g fill="#7a7a7a">
  <path d="M1141 213.4 L1143.3 208.2 L1144.6 208.7 L1142.8 214 Z"/>
  <circle cx="1142" cy="213.5" r="1.6"/>
  <circle cx="1138.4" cy="206.4" r="0.85"/><circle cx="1141.7" cy="205.5" r="0.85"/><circle cx="1145.1" cy="206.3" r="0.85"/><circle cx="1147.6" cy="208.8" r="0.85"/><circle cx="1148.6" cy="212.5" r="0.85"/>
  <path d="M1203.1 203.9 L1203.2 209 L1208.3 208.9 Z"/>
 </g>
</svg>
<!-- /CHARTS -->

<!-- EVENTS -->
<div class="t" style="left:76.3px;top:865.8px;font-size:15px;color:#222;letter-spacing:0.25px">Events State</div>
<div class="t" style="left:75.5px;top:885.8px;font-size:13px;color:#8f8f8f;letter-spacing:0.55px">2021/11/3</div>
<div class="t" style="left:151.4px;top:885.8px;font-size:13px;color:#8f8f8f;letter-spacing:0.1px">09:21:20</div>
<svg style="left:1800px;top:860px" width="75" height="30" viewBox="1800 860 75 30">
 <g fill="none" stroke="#727272" stroke-width="1.6">
  <path d="M1808 875.2 H1832 M1824.4 867.6 L1832.2 875.2 L1824.4 882.8"/>
 </g>
 <path d="M1850.88 871.35 A7.3 7.3 0 0 1 1864.39 873.73 M1849.93 875.64 A7.3 7.3 0 0 0 1862.79 879.69" fill="none" stroke="#727272" stroke-width="1.7"/><path d="M1849.44 873.84 L1848.99 869.15 L1853.73 871.89 Z" fill="#727272"/><path d="M1864.64 877.49 L1864.27 882.19 L1860.08 878.67 Z" fill="#727272"/>
 <g>
  
 </g>
 <g fill="#727272">
  
 </g>
</svg>
<div class="abs" style="left:68px;top:912px;width:1806px;height:35px;background:#f3f3f3"></div>
<svg style="left:68px;top:912px" width="1806" height="35" viewBox="68 912 1806 35">
 <path d="M112.4 926 L116.6 921.8 L120.8 926 Z" fill="#222"/>
 <path d="M112.4 933.6 L116.6 937.8 L120.8 933.6 Z" fill="#bdbdbd"/>
 <path d="M305.1 926 L309.5 921.8 L313.9 926 Z" fill="#c2c2c2"/>
 <path d="M305.1 933.6 L309.5 937.8 L313.9 933.6 Z" fill="#c2c2c2"/>
 <path d="M990.4 926 L994.9 921.8 L999.4 926 Z" fill="#c2c2c2"/>
 <path d="M990.4 933.6 L994.9 937.8 L999.4 933.6 Z" fill="#c2c2c2"/>
</svg>
<div class="t" style="left:132.4px;top:922px;font-size:13px;color:#8c8c8c;letter-spacing:0.25px">Last State</div>
<div class="t" style="left:325.7px;top:922px;font-size:13px;color:#8c8c8c;letter-spacing:0.23px">Monitoring Object Resource</div>
<div class="t" style="left:715.2px;top:922px;font-size:13px;color:#8c8c8c;letter-spacing:0.25px">Title</div>
<div class="t" style="left:1010.7px;top:922px;font-size:13px;color:#8c8c8c;letter-spacing:0.25px">Last State Change</div>
<div class="t" style="left:1353.1px;top:922px;font-size:13px;color:#8c8c8c;letter-spacing:0.25px">Last Value</div>
<div class="t" style="left:1664.6px;top:922px;font-size:13px;color:#8c8c8c;letter-spacing:0.25px">Last Value Time</div>
<div class="abs" style="left:79px;top:958px;width:1784px;height:140px;background:#fafafa;border-radius:6px"></div>
<svg style="left:930px;top:1024px" width="24" height="24" viewBox="930 1024 24 24">
 <circle cx="941.6" cy="1035.7" r="8.6" fill="none" stroke="#555" stroke-width="1.3"/>
 <rect x="940.9" y="1031.6" width="1.5" height="5.2" fill="#555"/>
 <rect x="940.9" y="1038.2" width="1.5" height="1.6" fill="#555"/>
</svg>
<div class="t" style="left:962.4px;top:1028px;font-size:13px;color:#5e5e5e;letter-spacing:0.2px">No Data</div>
<!-- /EVENTS -->
<!-- bottom bars -->
<div class="abs" style="left:41px;top:1057px;width:1878px;height:8px;background:#ececec"></div>
<div class="abs" style="left:41px;top:1065px;width:1878px;height:13px;background:#dadada"></div>
</body></html>
